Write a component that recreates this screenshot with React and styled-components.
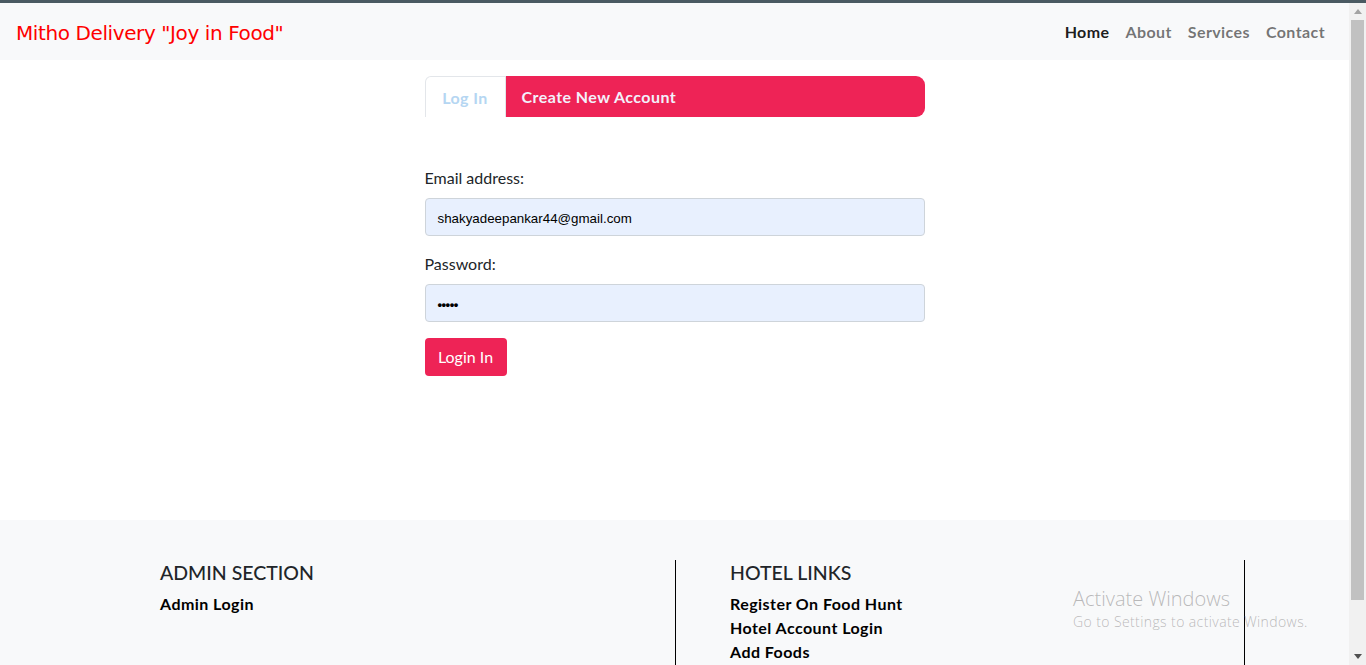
import React from "react";
import styled, { createGlobalStyle } from "styled-components";

const Global = createGlobalStyle`
  html, body { margin: 0; padding: 0; height: 665px; overflow: hidden; }
  body { font-family: "Segoe UI", Lato, "Noto Sans", sans-serif; color: #212529; background: #fff; }
  * { box-sizing: border-box; }
`;

const Shell = styled.div`
  display: flex;
  flex-direction: column;
  height: 665px;
  width: 1366px;
`;

const TopStrip = styled.div`
  height: 3px;
  background: #4a5a62;
  flex: none;
`;

const Body = styled.div`
  display: flex;
  flex: 1;
  min-height: 0;
`;

const Page = styled.div`
  flex: 1;
  min-width: 0;
  overflow: hidden;
  display: flex;
  flex-direction: column;
  position: relative;
`;

const Navbar = styled.nav`
  height: 57px;
  flex: none;
  background: #f8f9fa;
  display: flex;
  align-items: center;
  justify-content: space-between;
  padding: 0 16px 0 16px;
`;

const Brand = styled.a`
  font-family: "Comic Sans MS", "DejaVu Sans", cursive;
  color: #f00;
  font-size: 20px;
  letter-spacing: -0.4px;
  text-decoration: none;
  margin-top: 3px;
`;

const NavList = styled.ul`
  display: flex;
  list-style: none;
  margin: 0;
  padding: 0;
`;

const NavLink = styled.li`
  padding: 8px 8px;
  font-weight: 700;
  font-size: 16px;
  letter-spacing: 0.4px;
  color: ${(p) => (p.$active ? "rgba(0,0,0,0.9)" : "rgba(0,0,0,0.55)")};
`;

const Main = styled.main`
  height: 460px;
  flex: none;
  display: flex;
  flex-direction: column;
  align-items: center;
  padding-top: 16px;
`;

const Card = styled.div`
  width: 500px;
`;

const Tabs = styled.div`
  display: flex;
  height: 41px;
`;

const LoginTab = styled.div`
  width: 81px;
  border: 1px solid #e3e6ea;
  border-bottom: none;
  border-radius: 6px 0 0 0;
  display: flex;
  align-items: center;
  justify-content: center;
  color: #b5d6f2;
  font-weight: 700;
  font-size: 16px;
  letter-spacing: 0.45px;
  background: #fff;
`;

const CreateTab = styled.div`
  flex: 1;
  background: #ee2356;
  border-radius: 0 9px 9px 0;
  display: flex;
  align-items: center;
  padding-left: 16px;
  color: #f3f0fb;
  font-weight: 700;
  font-size: 16px;
  letter-spacing: 0.45px;
`;

const Form = styled.form`
  margin-top: 49px;
  display: flex;
  flex-direction: column;
`;

const Field = styled.div`
  margin-bottom: 16px;
  display: flex;
  flex-direction: column;
`;

const Label = styled.label`
  font-size: 16px;
  line-height: 24px;
  margin-bottom: 8px;
`;

const Input = styled.div`
  height: 38px;
  border: 1px solid #ced4da;
  border-radius: 4px;
  background: #e8f0fe;
  display: flex;
  align-items: center;
  padding: 3px 12px 0;
  font-family: "Liberation Sans", Arial, sans-serif;
  font-size: 13.33px;
  color: #000;
`;

const Dots = styled.span`
  font-size: 13px;
  letter-spacing: -0.5px;
  font-weight: 700;
`;

const Button = styled.button`
  align-self: flex-start;
  height: 38px;
  width: 82px;
  background: #ee2356;
  border: none;
  border-radius: 4px;
  color: #fff;
  font-family: inherit;
  font-size: 16px;
  padding: 0 0 2px;
`;

const Footer = styled.footer`
  flex: 1;
  background: #f8f9fa;
  padding-top: 40px;
  padding-left: 104px;
  display: flex;
`;

const Col = styled.div`
  width: ${(p) => p.$w}px;
  padding-left: ${(p) => p.$pl}px;
  border-right: 1px solid #000;
`;

const ColTitle = styled.h5`
  margin: 0 0 6px;
  font-size: 19.5px;
  line-height: 26px;
  font-weight: 500;
  text-transform: uppercase;
  color: #212529;
`;

const FootLink = styled.a`
  display: block;
  font-weight: 700;
  font-size: 16px;
  line-height: 24px;
  letter-spacing: 0.45px;
  color: #000;
  text-decoration: none;
`;

const Watermark = styled.div`
  position: absolute;
  left: 1073px;
  top: 582px;
  color: rgba(120, 120, 120, 0.5);
  font-family: "Segoe UI", "Open Sans", sans-serif;
  font-weight: 300;
  pointer-events: none;
`;

const WmTitle = styled.div`
  font-size: 20px;
  line-height: 28px;
`;

const WmSub = styled.div`
  font-size: 14px;
  line-height: 18px;
  letter-spacing: 0.4px;
`;

const Scrollbar = styled.div`
  width: 17px;
  flex: none;
  background: #f1f1f1;
  display: flex;
  flex-direction: column;
  align-items: center;
`;

const Arrow = styled.div`
  height: 17px;
  width: 17px;
  display: flex;
  align-items: center;
  justify-content: center;
`;

const Thumb = styled.div`
  width: 13px;
  height: 580px;
  background: #c1c1c1;
`;

const Spacer = styled.div`
  flex: 1;
`;

export default function App() {
  return (
    <>
      <Global />
      <Shell>
        <TopStrip />
        <Body>
          <Page>
            <Navbar>
              <Brand>Mitho Delivery "Joy in Food"</Brand>
              <NavList>
                <NavLink $active>Home</NavLink>
                <NavLink>About</NavLink>
                <NavLink>Services</NavLink>
                <NavLink>Contact</NavLink>
              </NavList>
            </Navbar>
            <Main>
              <Card>
                <Tabs>
                  <LoginTab>Log In</LoginTab>
                  <CreateTab>Create New Account</CreateTab>
                </Tabs>
                <Form onSubmit={(e) => e.preventDefault()}>
                  <Field>
                    <Label>Email address:</Label>
                    <Input>shakyadeepankar44@gmail.com</Input>
                  </Field>
                  <Field>
                    <Label>Password:</Label>
                    <Input>
                      <Dots>•••••</Dots>
                    </Input>
                  </Field>
                  <Button type="button">Login In</Button>
                </Form>
              </Card>
            </Main>
            <Footer>
              <Col $w={572} $pl={56}>
                <ColTitle>Admin Section</ColTitle>
                <FootLink>Admin Login</FootLink>
              </Col>
              <Col $w={569} $pl={54}>
                <ColTitle>Hotel Links</ColTitle>
                <FootLink>Register On Food Hunt</FootLink>
                <FootLink>Hotel Account Login</FootLink>
                <FootLink>Add Foods</FootLink>
              </Col>
            </Footer>
            <Watermark>
              <WmTitle>Activate Windows</WmTitle>
              <WmSub>Go to Settings to activate Windows.</WmSub>
            </Watermark>
          </Page>
          <Scrollbar>
            <Arrow>
              <svg width="8" height="5" viewBox="0 0 8 5">
                <path d="M0 5 L4 0 L8 5 Z" fill="#a3a3a3" />
              </svg>
            </Arrow>
            <Thumb />
            <Spacer />
            <Arrow>
              <svg width="8" height="5" viewBox="0 0 8 5">
                <path d="M0 0 L4 5 L8 0 Z" fill="#505050" />
              </svg>
            </Arrow>
          </Scrollbar>
        </Body>
      </Shell>
    </>
  );
}
